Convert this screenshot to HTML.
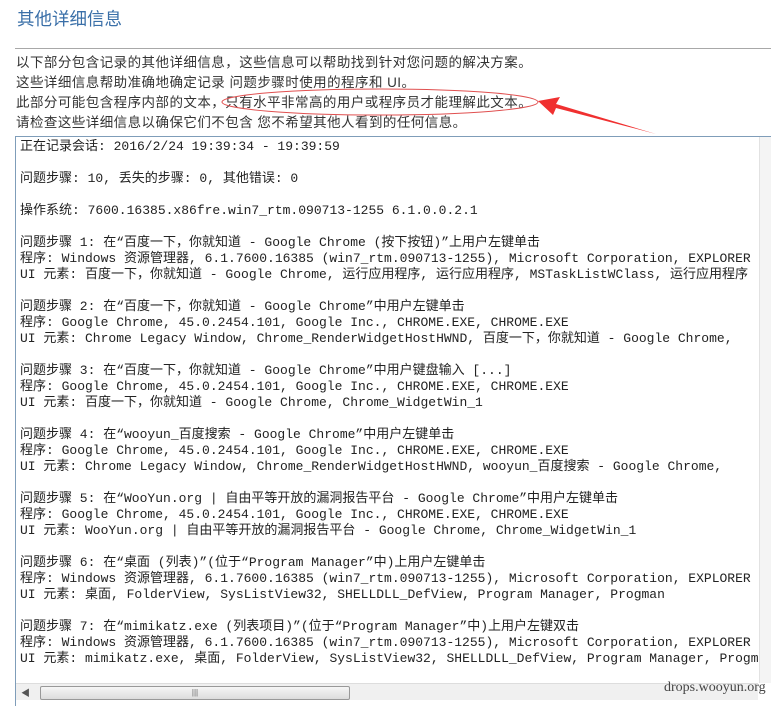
<!DOCTYPE html>
<html><head><meta charset="utf-8"><style>
body{margin:0;width:771px;height:699px;overflow:hidden;background:#fff;position:relative;font-family:"Liberation Sans","Noto Sans CJK SC",sans-serif}
.t{position:absolute;left:17px;top:6px;font-size:17.5px;color:#3a6fa8}
.hr{position:absolute;left:15px;top:48px;width:756px;height:1px;background:#a8a8a8}
.p{position:absolute;left:16px;top:53px;font-size:13.5px;line-height:20px;color:#333;letter-spacing:.45px}
.box{position:absolute;left:15px;top:136px;width:760px;height:570px;border:1px solid #7f9db9;border-right:none;border-bottom:none;box-sizing:border-box}
pre{position:absolute;left:20px;top:139px;margin:0;font-family:"Liberation Mono","Noto Sans CJK SC",monospace;font-size:13px;line-height:16px;color:#222;white-space:pre;width:738px;overflow:hidden}
.vs{position:absolute;left:759px;top:137px;width:12px;height:546px;background:#f4f4f4;border-left:1px solid #e2e2e2}
.hs{position:absolute;left:16px;top:683px;width:742px;height:16px;background:#f0f0f0;border-top:1px solid #ddd}
.thumb{position:absolute;left:24px;top:2px;width:308px;height:12px;background:linear-gradient(#f6f6f6,#dcdcdc);border:1px solid #999;border-radius:2px;font-size:8px;text-align:center;color:#666;line-height:12px}
.wm{position:absolute;left:664px;top:680px;font-family:"Liberation Serif",serif;font-size:14px;color:#444}
</style></head><body>
<div class="t">其他详细信息</div>
<div class="hr"></div>
<div class="p">以下部分包含记录的其他详细信息，这些信息可以帮助找到针对您问题的解决方案。<br>这些详细信息帮助准确地确定记录 问题步骤时使用的程序和 UI。<br>此部分可能包含程序内部的文本，只有水平非常高的用户或程序员才能理解此文本。<br>请检查这些详细信息以确保它们不包含 您不希望其他人看到的任何信息。</div>
<div class="box"></div>
<pre>正在记录会话: 2016/2/24 19:39:34 - 19:39:59

问题步骤: 10, 丢失的步骤: 0, 其他错误: 0

操作系统: 7600.16385.x86fre.win7_rtm.090713-1255 6.1.0.0.2.1

问题步骤 1: 在“百度一下，你就知道 - Google Chrome (按下按钮)”上用户左键单击
程序: Windows 资源管理器, 6.1.7600.16385 (win7_rtm.090713-1255), Microsoft Corporation, EXPLORER
UI 元素: 百度一下，你就知道 - Google Chrome, 运行应用程序, 运行应用程序, MSTaskListWClass, 运行应用程序

问题步骤 2: 在“百度一下，你就知道 - Google Chrome”中用户左键单击
程序: Google Chrome, 45.0.2454.101, Google Inc., CHROME.EXE, CHROME.EXE
UI 元素: Chrome Legacy Window, Chrome_RenderWidgetHostHWND, 百度一下，你就知道 - Google Chrome,

问题步骤 3: 在“百度一下，你就知道 - Google Chrome”中用户键盘输入 [...]
程序: Google Chrome, 45.0.2454.101, Google Inc., CHROME.EXE, CHROME.EXE
UI 元素: 百度一下，你就知道 - Google Chrome, Chrome_WidgetWin_1

问题步骤 4: 在“wooyun_百度搜索 - Google Chrome”中用户左键单击
程序: Google Chrome, 45.0.2454.101, Google Inc., CHROME.EXE, CHROME.EXE
UI 元素: Chrome Legacy Window, Chrome_RenderWidgetHostHWND, wooyun_百度搜索 - Google Chrome,

问题步骤 5: 在“WooYun.org | 自由平等开放的漏洞报告平台 - Google Chrome”中用户左键单击
程序: Google Chrome, 45.0.2454.101, Google Inc., CHROME.EXE, CHROME.EXE
UI 元素: WooYun.org | 自由平等开放的漏洞报告平台 - Google Chrome, Chrome_WidgetWin_1

问题步骤 6: 在“桌面 (列表)”(位于“Program Manager”中)上用户左键单击
程序: Windows 资源管理器, 6.1.7600.16385 (win7_rtm.090713-1255), Microsoft Corporation, EXPLORER
UI 元素: 桌面, FolderView, SysListView32, SHELLDLL_DefView, Program Manager, Progman

问题步骤 7: 在“mimikatz.exe (列表项目)”(位于“Program Manager”中)上用户左键双击
程序: Windows 资源管理器, 6.1.7600.16385 (win7_rtm.090713-1255), Microsoft Corporation, EXPLORER
UI 元素: mimikatz.exe, 桌面, FolderView, SysListView32, SHELLDLL_DefView, Program Manager, Progman</pre>
<div class="vs"></div>
<div class="hs"><span style="position:absolute;left:5px;top:2px;font-size:9px;color:#555">◀</span><div class="thumb">|||</div></div>
<div class="wm">drops.wooyun.org</div>
<svg style="position:absolute;left:0;top:0" width="771" height="699">
<ellipse cx="380" cy="102" rx="158" ry="13" fill="none" stroke="#e05050" stroke-width="1"/>
<path d="M656 134 L556 104 L560 97 L538 101 L553 115 L556 108 Z" fill="#f03030"/>
</svg>
</body></html>
